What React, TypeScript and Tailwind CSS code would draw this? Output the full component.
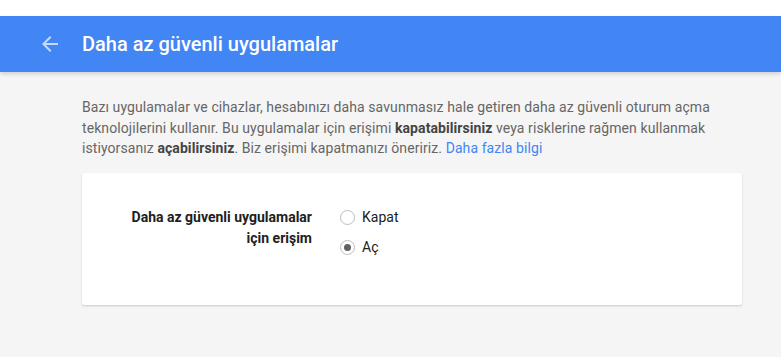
import React from "react";

export default function App() {
  return (
    <div className="w-[781px] h-[357px] bg-[#f5f5f5] overflow-hidden" style={{ fontFamily: "Roboto, 'Noto Sans', sans-serif" }}>
      <div className="h-[16px] bg-white" />
      <div className="h-[56px] bg-[#4285f4] flex items-center shadow-[0_2px_4px_rgba(0,0,0,0.15)] relative z-10">
        <div className="w-[82px] pl-[42px] flex items-center">
          <svg width="16" height="16" viewBox="0 0 16 16" className="shrink-0">
            <path d="M16 7H3.83l5.59-5.59L8 0 0 8l8 8 1.41-1.41L3.83 9H16z" fill="rgba(255,255,255,0.7)" />
          </svg>
        </div>
        <div className="text-white text-[20px] font-medium leading-none">Daha az güvenli uygulamalar</div>
      </div>
      <div className="pl-[82px] pr-[39px]">
        <p className="pt-[25px] text-[14px] leading-[20.5px] tracking-[0.08px] text-[#666666]">
          Bazı uygulamalar ve cihazlar, hesabınızı daha savunmasız hale getiren daha az güvenli oturum açma teknolojilerini kullanır. Bu uygulamalar için erişimi <b className="font-bold text-[#444]">kapatabilirsiniz</b> veya risklerine rağmen kullanmak istiyorsanız <b className="font-bold text-[#444]">açabilirsiniz</b>. Biz erişimi kapatmanızı öneririz. <span className="text-[#4285f4]">Daha fazla bilgi</span>
        </p>
        <div className="mt-[14px] w-[660px] h-[132px] bg-white rounded-[2px] shadow-[0_1px_2px_rgba(0,0,0,0.18)] flex pt-[34px]">
          <div className="w-[230px] text-right text-[14px] font-bold leading-[21px] text-[#212121]">
            Daha az güvenli uygulamalar<br />için erişim
          </div>
          <div className="ml-[28px] flex flex-col gap-[9px]">
            <label className="flex items-center gap-[7px] text-[14px] text-[#212121] leading-[21px]">
              <span className="w-[15px] h-[15px] rounded-full border border-[#bdbdbd] bg-white" />
              Kapat
            </label>
            <label className="flex items-center gap-[7px] text-[14px] text-[#212121] leading-[21px]">
              <span className="w-[15px] h-[15px] rounded-full border border-[#bdbdbd] bg-white flex items-center justify-center">
                <span className="w-[7px] h-[7px] rounded-full bg-[#616161]" />
              </span>
              Aç
            </label>
          </div>
        </div>
      </div>
    </div>
  );
}
